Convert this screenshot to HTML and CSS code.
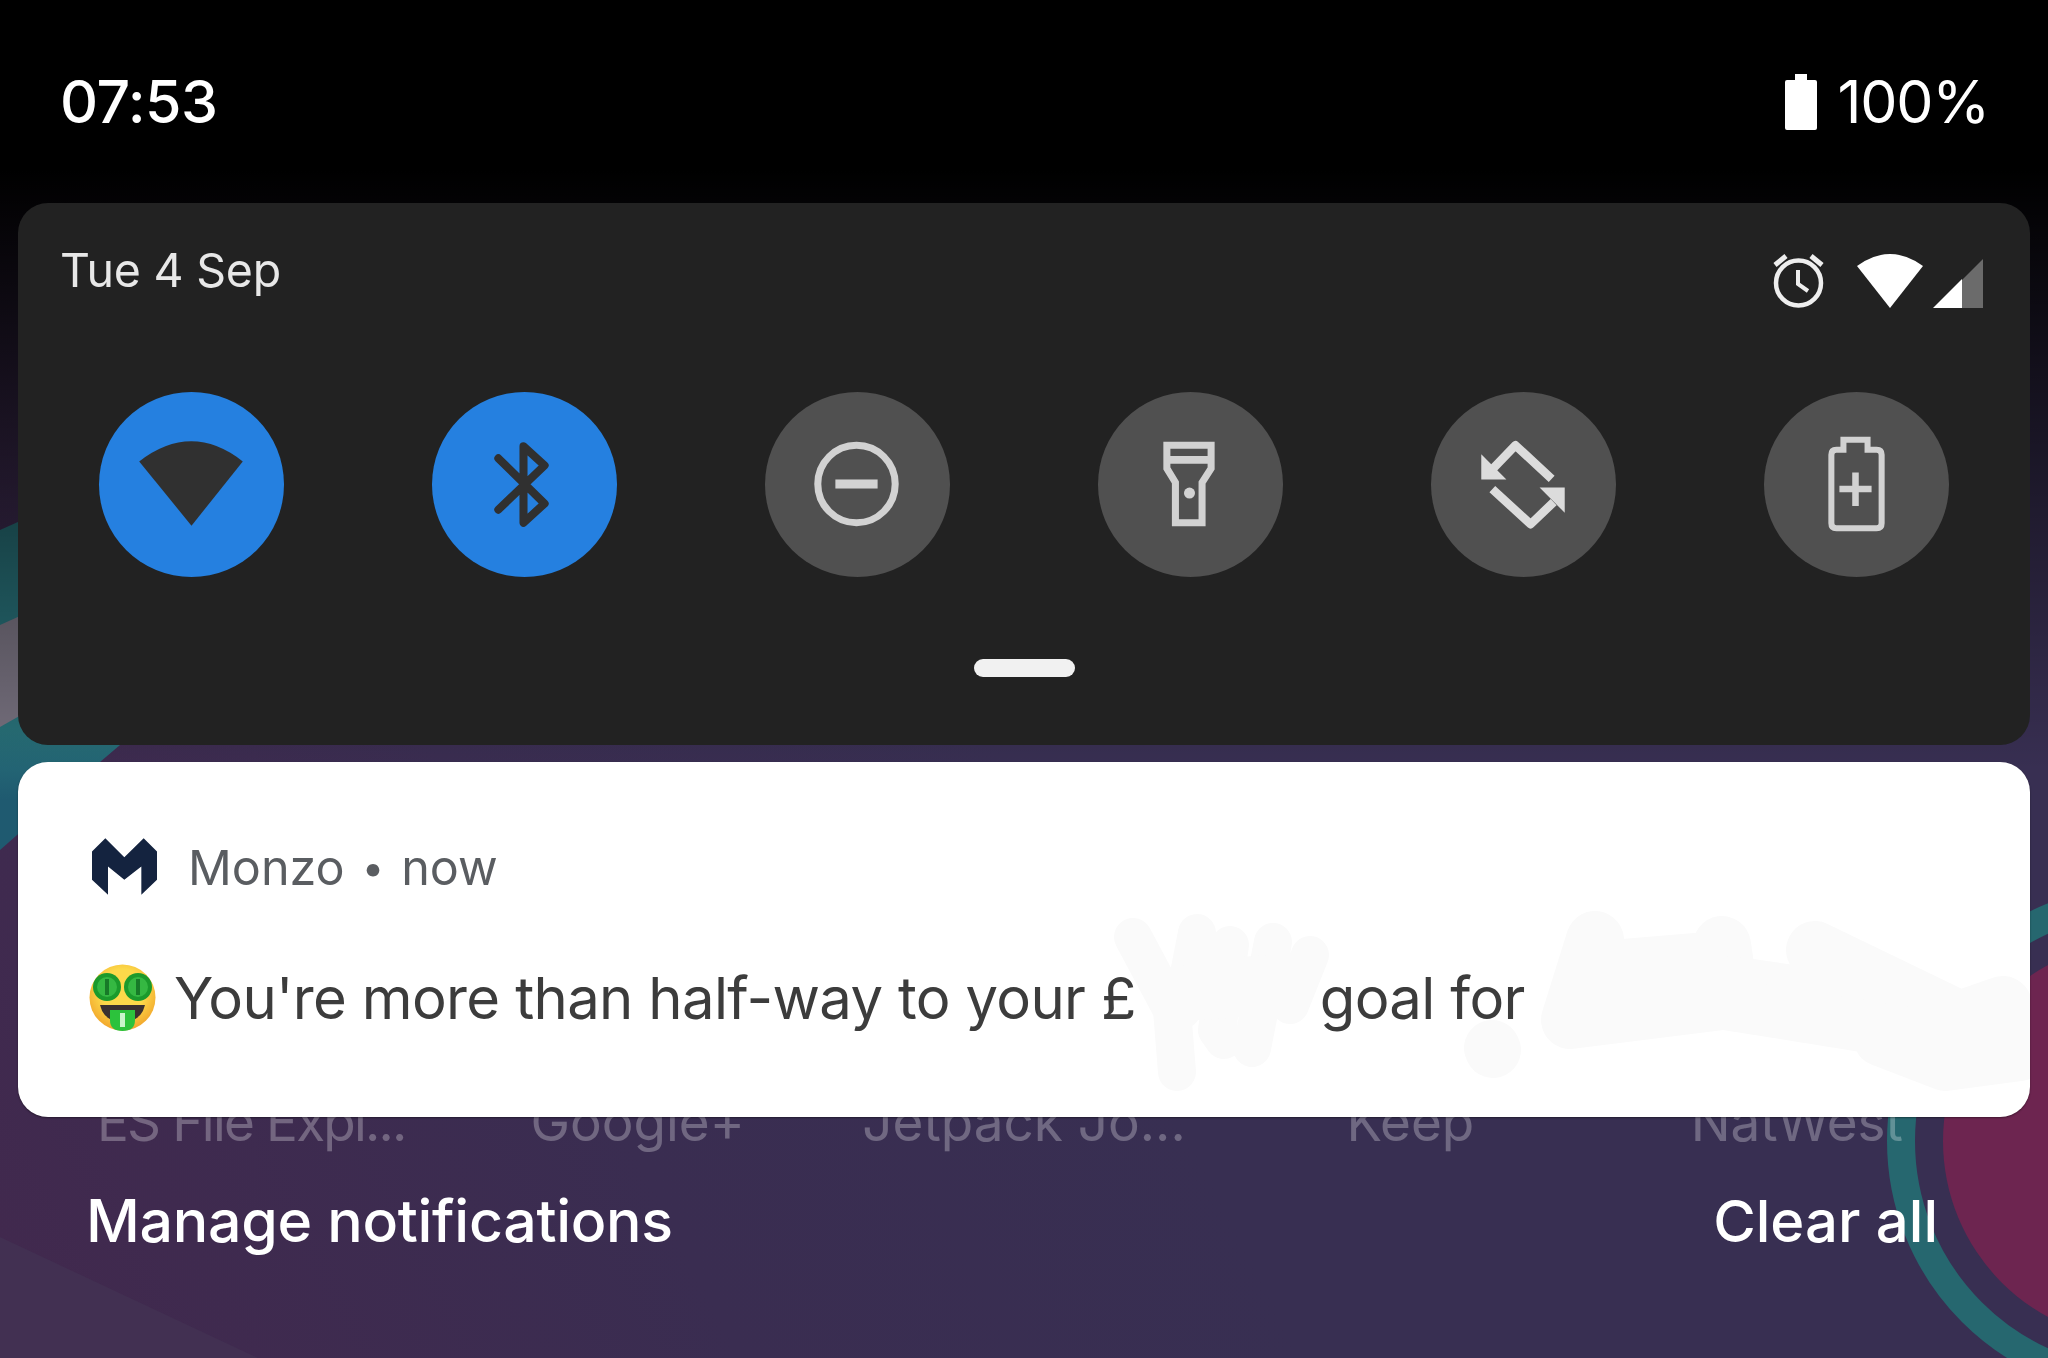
FILE: index.html
```html
<!DOCTYPE html>
<html lang="en">
<head>
<meta charset="utf-8">
<title>Notification shade</title>
<link rel="stylesheet" href="styles.css">
</head>
<body>
<div class="screen">
  <svg class="wallpaper" viewBox="0 0 2048 1358" aria-hidden="true">
    <defs>
      <linearGradient id="base" gradientUnits="userSpaceOnUse" x1="0" y1="1250" x2="1000" y2="750">
        <stop offset="0" stop-color="#41294e"/>
        <stop offset="0.55" stop-color="#3a2d51"/>
        <stop offset="1" stop-color="#382f52"/>
      </linearGradient>
      <linearGradient id="teal" gradientUnits="userSpaceOnUse" x1="0" y1="520" x2="0" y2="800">
        <stop offset="0" stop-color="#287078"/>
        <stop offset="0.75" stop-color="#287078"/>
        <stop offset="1" stop-color="#1f5a70"/>
      </linearGradient>
      <linearGradient id="scrim" gradientUnits="userSpaceOnUse" x1="0" y1="170" x2="0" y2="770">
        <stop offset="0" stop-color="#000" stop-opacity="1"/>
        <stop offset="1" stop-color="#000" stop-opacity="0"/>
      </linearGradient>
    </defs>
    <rect width="2048" height="1358" fill="url(#base)"/>
    <polygon points="0,1237 258,1358 0,1358" fill="#423052"/>
    <polygon points="0,530 130,472 130,735 120,745 100,762 0,850" fill="url(#teal)"/>
    <polygon points="0,625 60,598 60,693 0,727" fill="#77717f"/>
    <circle cx="2143" cy="1141" r="242" fill="none" stroke="#26676f" stroke-width="28"/>
    <circle cx="2143" cy="1141" r="200" fill="#6d2550"/>
    <rect width="2048" height="800" fill="url(#scrim)"/>
  </svg>

  <div class="launcher">
    <span class="label-narrow">ES File Expl...</span>
    <span>Google+</span>
    <span>Jetpack Jo...</span>
    <span>Keep</span>
    <span>NatWest</span>
  </div>

  <header class="status">
    <span class="time">07:53</span>
    <div class="status-right">
      <svg class="battery" viewBox="0 0 32 56" aria-hidden="true">
        <path d="M10 0H22V6H30Q32 6 32 8V54Q32 56 30 56H2Q0 56 0 54V8Q0 6 2 6H10Z" fill="#fff"/>
      </svg>
      <span class="percent">100%</span>
    </div>
  </header>

  <section class="panel">
    <div class="panel-head">
      <span class="date">Tue 4 Sep</span>
      <div class="panel-icons">
        <svg class="ic-alarm" viewBox="0 0 51 55" aria-hidden="true">
          <circle cx="25.5" cy="30" r="22.5" fill="none" stroke="#eee" stroke-width="4.5"/>
          <path d="M25 17V31L35 38" fill="none" stroke="#eee" stroke-width="4"/>
          <path d="M2 12L13 3M49 12L38 3" fill="none" stroke="#eee" stroke-width="5"/>
        </svg>
        <svg class="ic-wifi" viewBox="0 0 66 54" aria-hidden="true">
          <path d="M0 12Q33 -12 66 12L33 54Z" fill="#fff"/>
        </svg>
        <svg class="ic-signal" viewBox="0 0 50 49" aria-hidden="true">
          <path d="M29 21L50 0V49H29Z" fill="#6b6b6b"/>
          <path d="M29 20V49H0Z" fill="#fff"/>
        </svg>
      </div>
    </div>

    <div class="tiles">
      <div class="tile tile-on">
        <svg viewBox="0 0 184 184" aria-hidden="true"><path d="M40 69Q92 29 143 69L92 133Z" fill="#303030"/></svg>
      </div>
      <div class="tile tile-on">
        <svg viewBox="0 0 184 184" aria-hidden="true"><path d="M66 66L112 111L91 130V54L112 73L66 117" fill="none" stroke="#303030" stroke-width="8" stroke-linecap="round" stroke-linejoin="round"/></svg>
      </div>
      <div class="tile">
        <svg viewBox="0 0 184 184" aria-hidden="true">
          <circle cx="91" cy="91.5" r="38.5" fill="none" stroke="#d2d2d2" stroke-width="7"/>
          <rect x="70" y="87" width="42" height="9" fill="#d2d2d2"/>
        </svg>
      </div>
      <div class="tile">
        <svg viewBox="0 0 184 184" aria-hidden="true">
          <path d="M68.5 53H112.5V76L103.5 90V130H77V90L68.5 76Z" fill="none" stroke="#d2d2d2" stroke-width="7"/>
          <path d="M68.5 67.5H112.5" fill="none" stroke="#d2d2d2" stroke-width="7.5"/>
          <circle cx="91" cy="100.5" r="5.5" fill="#d2d2d2"/>
        </svg>
      </div>
      <div class="tile">
        <svg viewBox="0 0 184 184" aria-hidden="true">
          <path d="M120 86.5L84 53L57 81M61 96.5L99 131.5L122 109.5" fill="none" stroke="#dcdcdc" stroke-width="8.5" stroke-linejoin="round"/>
          <path d="M50 87V62L75 87ZM133 95V120L108 95Z" fill="#dcdcdc"/>
        </svg>
      </div>
      <div class="tile">
        <svg viewBox="0 0 184 184" aria-hidden="true">
          <path d="M79 57.5V47.5H103V57.5H112Q117 57.5 117 62.5V130.5Q117 135.5 112 135.5H72Q67 135.5 67 130.5V62.5Q67 57.5 72 57.5Z" fill="none" stroke="#d2d2d2" stroke-width="6"/>
          <path d="M75 96.5H107M91 80V113.5" fill="none" stroke="#d2d2d2" stroke-width="6.5"/>
        </svg>
      </div>
    </div>

    <div class="handle"></div>
  </section>

  <section class="card">
    <div class="card-app">
      <svg class="logo" viewBox="95 55 195 170" aria-hidden="true">
        <path d="M135 55L192 112L250 55L290 95V180L243 225V140L192 180L143 140V225L95 180V95Z" fill="#14233f"/>
      </svg>
      <span class="app-name">Monzo</span>
      <span class="dot">•</span>
      <span class="app-when">now</span>
    </div>
    <div class="card-msg">
      <svg class="emoji" viewBox="0 0 67 67" aria-hidden="true">
        <defs>
          <radialGradient id="face" cx="0.5" cy="0.4" r="0.6">
            <stop offset="0.55" stop-color="#fcd94a"/>
            <stop offset="1" stop-color="#f2a62c"/>
          </radialGradient>
        </defs>
        <circle cx="33.5" cy="33.5" r="33" fill="url(#face)"/>
        <circle cx="18" cy="23" r="14" fill="#1b9a2c"/>
        <circle cx="49" cy="23" r="14" fill="#1b9a2c"/>
        <circle cx="18" cy="23" r="10" fill="#35b842"/>
        <circle cx="49" cy="23" r="10" fill="#35b842"/>
        <path d="M18 15V31M49 15V31" stroke="#177a28" stroke-width="4"/>
        <path d="M11 41H56Q52 58 33.5 58Q15 58 11 41Z" fill="#3a3030"/>
        <path d="M21 46H46V56Q46 67 33.5 67Q21 67 21 56Z" fill="#2cc23c"/>
        <path d="M33.5 49V63" stroke="#c9f5cc" stroke-width="5"/>
      </svg>
      <span class="msg-a">You're more than half-way to your £</span>
      <span class="msg-b">goal for</span>
    </div>
    <svg class="scribble" viewBox="18 762 2012 355" aria-hidden="true">
      <g fill="none" stroke="#fafafa" stroke-linecap="round" stroke-linejoin="round">
        <path stroke-width="38" d="M1133 937L1172 1010L1177 1072M1197 933L1182 1010M1230 945L1217 1030L1224 1040M1273 942L1252 1048M1310 955L1290 1005"/>
        <path stroke-width="60" d="M1200 990L1270 985"/>
        <path stroke-width="58" d="M1595 940L1570 1020L1730 1000L1722 945M1600 970L1720 960"/>
        <path stroke-width="58" d="M1815 950L1960 1020L2003 1005M1730 985L2010 1025"/>
        <path stroke-width="52" d="M1880 1040L1945 1065L2020 1055M1700 1000L1950 1040"/>
        <path stroke-width="56" d="M1492 1048L1493 1050"/>
      </g>
    </svg>
  </section>

  <footer class="actions">
    <span class="action-wide">Manage notifications</span>
    <span class="action-clear">Clear all</span>
  </footer>
</div>
</body>
</html>
```

FILE: styles.css
```css
* { box-sizing: border-box; }
html, body { margin: 0; padding: 0; background: #000; }
body { font-family: Inter, Roboto, sans-serif; }

.screen {
  position: relative;
  width: 2048px;
  height: 1358px;
  overflow: hidden;
  filter: blur(0.7px);
}

.wallpaper {
  position: absolute;
  inset: 0;
  width: 2048px;
  height: 1358px;
  display: block;
}

.launcher {
  position: absolute;
  top: 1087px;
  left: 58px;
  width: 1932px;
  display: grid;
  grid-template-columns: repeat(5, 1fr);
  justify-items: center;
  font-size: 53px;
  line-height: 70px;
  color: rgba(255, 255, 255, 0.28);
}
.label-narrow { letter-spacing: -1.8px; }

.status {
  position: relative;
  height: 203px;
  padding: 0 59px 0 60px;
  display: flex;
  justify-content: space-between;
  align-items: center;
  color: #fff;
  font-size: 59px;
  font-weight: 500;
  letter-spacing: -0.5px;
}
.status-right { display: flex; align-items: center; gap: 20px; }
.battery { width: 32px; height: 56px; display: block; }
.percent { font-weight: 400; letter-spacing: -1.2px; }

.panel {
  position: relative;
  margin: 0 18px;
  height: 542px;
  background: #222;
  border-radius: 30px;
  display: flex;
  flex-direction: column;
}
.panel-head {
  height: 189px;
  padding: 50px 47px 0 42px;
  display: flex;
  justify-content: space-between;
  align-items: flex-start;
}
.date {
  margin-top: -15px;
  font-size: 46.5px;
  letter-spacing: -0.2px;
  line-height: 64px;
  color: #e8e8e8;
}
.panel-icons { display: flex; align-items: flex-end; }
.ic-alarm { width: 51px; height: 55px; margin-right: 33px; }
.ic-wifi { width: 66px; height: 54px; margin-right: 10px; }
.ic-signal { width: 50px; height: 49px; }

.tiles {
  padding: 0 81px;
  display: flex;
  justify-content: space-between;
}
.tile { width: 185px; height: 185px; border-radius: 50%; background: #505050; }
.tile-on { background: #2580e0; }
.tile svg { width: 185px; height: 185px; display: block; }

.handle {
  width: 101px;
  height: 18px;
  margin: 82px auto 0;
  border-radius: 9px;
  background: #f1f1f1;
}

.card {
  position: relative;
  margin: 17px 18px 0;
  height: 355px;
  padding: 76px 0 0 74px;
  background: #fff;
  border-radius: 30px;
  overflow: hidden;
  box-shadow: 0 1px 2px rgba(0, 0, 0, 0.4);
}
.card-app {
  display: flex;
  align-items: center;
  height: 57px;
  font-size: 48.5px;
  color: #5a5d61;
}
.app-name, .app-when, .dot { position: relative; top: 1px; }
.logo { width: 65px; height: 57px; margin-right: 31px; }
.dot { margin: 0 17px 0 17px; font-size: 40px; }
.card-msg {
  position: relative;
  margin-top: 69px;
  margin-left: -3px;
  display: flex;
  align-items: center;
  height: 67px;
  font-size: 58px;
  letter-spacing: -0.65px;
  color: #3c3c3c;
}
.emoji { width: 67px; height: 67px; margin-right: 18px; }
.msg-b { margin-left: 184px; }
.scribble {
  position: absolute;
  inset: 0;
  width: 2012px;
  height: 355px;
}

.actions {
  position: relative;
  margin-top: 65px;
  padding: 0 110px 0 86px;
  display: flex;
  justify-content: space-between;
  font-size: 59px;
  font-weight: 500;
  line-height: 78px;
  color: #fff;
}
.action-wide { letter-spacing: -0.3px; }
.action-clear { font-size: 58px; }
```
